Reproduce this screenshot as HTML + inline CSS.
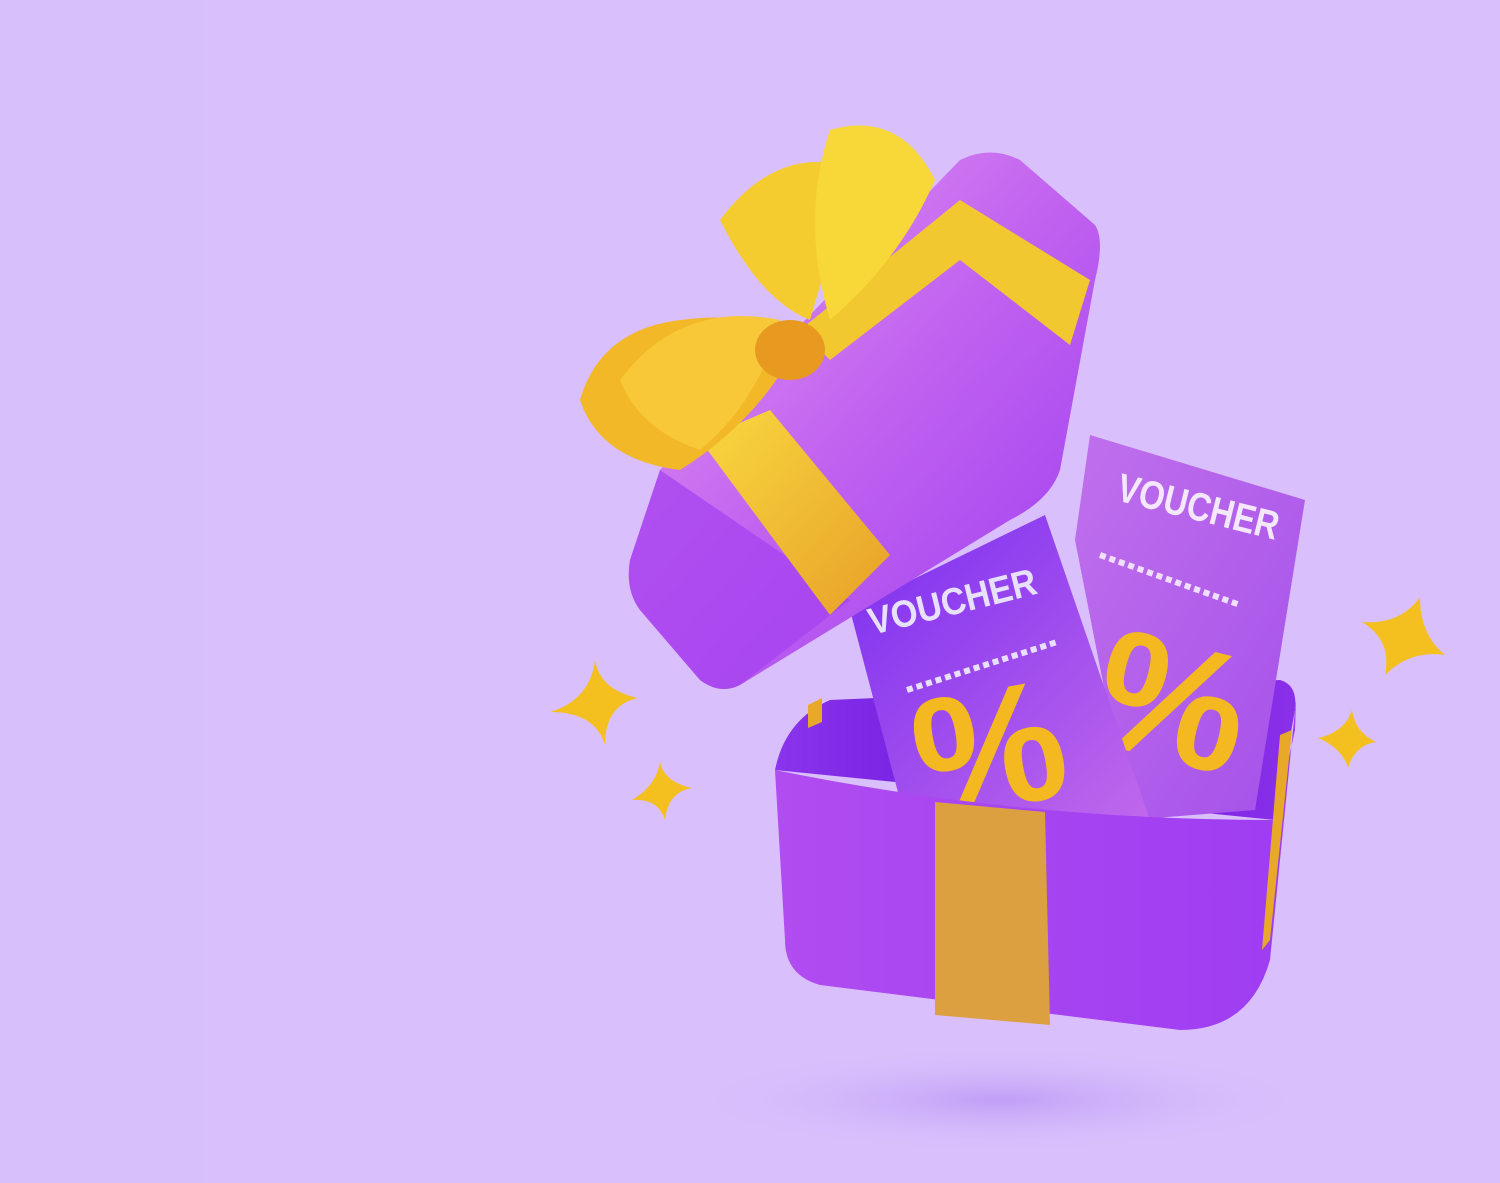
<!DOCTYPE html>
<html><head><meta charset="utf-8"><style>
html,body{margin:0;padding:0;width:1500px;height:1183px;overflow:hidden;background:#d9c0fc}
</style></head><body>
<svg width="1500" height="1183" viewBox="0 0 1500 1183" xmlns="http://www.w3.org/2000/svg">
<defs>
<linearGradient id="lid" x1="0" y1="0" x2="1" y2="1"><stop offset="0" stop-color="#e69ef0"/><stop offset="0.5" stop-color="#c162f0"/><stop offset="1" stop-color="#9c3cf0"/></linearGradient>
<linearGradient id="box" x1="0" y1="0" x2="1" y2="0"><stop offset="0" stop-color="#b04cf0"/><stop offset="1" stop-color="#9e3cf2"/></linearGradient>
<linearGradient id="yel" x1="0" y1="0" x2="1" y2="1"><stop offset="0" stop-color="#f8d840"/><stop offset="1" stop-color="#e8a028"/></linearGradient>
<linearGradient id="v1" x1="0" y1="0" x2="1" y2="1"><stop offset="0" stop-color="#7a2ef0"/><stop offset="1" stop-color="#c068ec"/></linearGradient>
<linearGradient id="v2" x1="0" y1="0" x2="1" y2="1"><stop offset="0" stop-color="#c070ec"/><stop offset="1" stop-color="#a450ea"/></linearGradient>
<linearGradient id="ins" x1="0" y1="0" x2="1" y2="0"><stop offset="0" stop-color="#8a34ec"/><stop offset="0.5" stop-color="#6a14dc"/><stop offset="1" stop-color="#8a30ea"/></linearGradient>
<radialGradient id="sh"><stop offset="0" stop-color="#c09ef6"/><stop offset="1" stop-color="#d9c0fc" stop-opacity="0"/></radialGradient>
</defs>
<rect x="0" y="0" width="205" height="1183" fill="#d6bffa"/>
<ellipse cx="1000" cy="1100" rx="330" ry="55" fill="url(#sh)"/>
<!-- box inside -->
<path d="M775,770 Q785,720 830,700 L1280,680 Q1298,685 1295,710 L1275,820 Z" fill="url(#ins)"/>
<polygon points="808,705 822,698 822,722 808,728" fill="#e8a828"/>
<!-- back voucher -->
<polygon points="1090,435 1305,500 1255,810 1130,820 1075,540" fill="url(#v2)"/>
<text x="1115" y="500" transform="rotate(14 1115 500)" font-family="Liberation Sans,sans-serif" font-weight="bold" font-size="40" fill="#f4e8ff" textLength="165" lengthAdjust="spacingAndGlyphs">VOUCHER</text>
<line x1="1100" y1="555" x2="1240" y2="605" stroke="#f0e0ff" stroke-width="6" stroke-dasharray="6 4"/>
<text x="1085" y="740" transform="rotate(14 1085 740)" font-family="Liberation Sans,sans-serif" font-weight="bold" font-size="170" fill="#f4b820">%</text>
<!-- front voucher -->
<polygon points="850,610 1045,515 1150,820 900,800" fill="url(#v1)"/>
<text x="872" y="635" transform="rotate(-14 872 635)" font-family="Liberation Sans,sans-serif" font-weight="bold" font-size="38" fill="#e8e0ff" textLength="172" lengthAdjust="spacingAndGlyphs">VOUCHER</text>
<line x1="907" y1="690" x2="1057" y2="642" stroke="#e8e0ff" stroke-width="6" stroke-dasharray="6 4"/>
<text x="925" y="820" transform="rotate(-10 925 820)" font-family="Liberation Sans,sans-serif" font-weight="bold" font-size="170" fill="#f4b820">%</text>
<!-- box front -->
<path d="M775,770 Q1020,820 1275,820 L1295,730 L1296,700 L1270,960 Q1250,1030 1180,1030 L820,985 Q785,975 785,940 Z" fill="url(#box)"/>
<polygon points="935,802 1045,812 1050,1025 935,1015" fill="#dca040"/>
<polygon points="1280,735 1292,730 1270,940 1262,950" fill="#e8a828"/>
<!-- lid -->
<path d="M660,470 L960,160 Q990,145 1020,160 L1095,225 Q1105,240 1095,280 L1060,470 Q1050,500 1010,520 L740,685 Q720,695 700,680 L640,610 Q625,590 630,560 Z" fill="url(#lid)"/>
<path d="M660,470 L850,600 L740,685 Q720,695 700,680 L640,610 Q625,590 630,560 Z" fill="#a440f0" opacity="0.7"/>
<!-- lid ribbon -->
<polygon points="700,440 770,410 890,555 830,615" fill="url(#yel)"/>
<polygon points="800,330 960,200 1090,280 1070,345 960,260 830,360" fill="#f2c830"/>
<!-- bow -->
<path d="M720,220 Q780,140 860,170 Q830,250 810,320 Q760,300 720,220 Z" fill="#f5cc30"/>
<path d="M830,130 Q900,110 935,180 Q900,260 830,320 Q800,220 830,130 Z" fill="#f8d838"/>
<path d="M580,400 Q600,330 680,320 Q760,310 800,340 Q760,420 680,470 Q600,460 580,400 Z" fill="#f2b828"/>
<path d="M620,380 Q680,300 780,320 Q760,400 700,450 Q640,430 620,380 Z" fill="#f8c838"/>
<ellipse cx="790" cy="350" rx="35" ry="30" fill="#e89a20"/>
<!-- stars -->
<g fill="#f4c020">
<path d="M595,660 Q600,690 638,698 Q605,705 605,745 Q595,712 550,712 Q590,700 595,660Z"/>
<path d="M660,762 Q664,782 692,788 Q668,792 665,820 Q658,798 632,800 Q656,786 660,762Z"/>
<path d="M1420,597 Q1420,635 1445,655 Q1410,650 1385,675 Q1392,640 1362,622 Q1400,625 1420,597Z"/>
<path d="M1352,710 Q1355,732 1376,742 Q1355,745 1348,768 Q1342,748 1318,738 Q1345,732 1352,710Z"/>
</g>
</svg>
</body></html>
